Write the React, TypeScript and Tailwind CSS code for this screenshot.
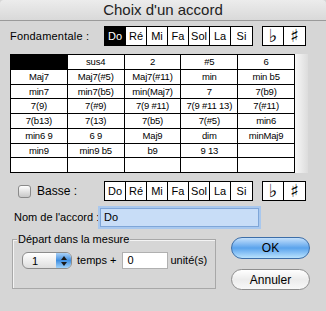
import React from 'react';

const notes = ['Do', 'Ré', 'Mi', 'Fa', 'Sol', 'La', 'Si'];

const chords: string[][] = [
  ['', 'sus4', '2', '#5', '6'],
  ['Maj7', 'Maj7(#5)', 'Maj7(#11)', 'min', 'min b5'],
  ['min7', 'min7(b5)', 'min(Maj7)', '7', '7(b9)'],
  ['7(9)', '7(#9)', '7(9 #11)', '7(9 #11 13)', '7(#11)'],
  ['7(b13)', '7(13)', '7(b5)', '7(#5)', 'min6'],
  ['min6 9', '6 9', 'Maj9', 'dim', 'minMaj9'],
  ['min9', 'min9 b5', 'b9', '9 13', ''],
  ['', '', '', '', ''],
];

const NoteRow = ({ selected }: { selected?: string }) => (
  <div className="flex items-center">
    <div className="flex h-[20px] border border-black divide-x divide-black bg-white">
      {notes.map((n) => (
        <div
          key={n}
          className={`w-[21px] flex items-center justify-center text-[11px] ${n === selected ? 'bg-black text-white' : 'text-black'}`}
        >
          {n}
        </div>
      ))}
    </div>
    <div className="ml-[9px] flex h-[20px] border border-black divide-x divide-black bg-white">
      <div className="w-[21px] flex items-center justify-center text-[18px] leading-none font-bold text-black" style={{ fontFamily: '"DejaVu Sans", sans-serif' }}>♭</div>
      <div className="w-[21px] flex items-center justify-center text-[18px] leading-none font-bold text-black" style={{ fontFamily: '"DejaVu Sans", sans-serif' }}>♯</div>
    </div>
  </div>
);

const App: React.FC = () => {
  return (
    <div className="w-[326px] h-[311px] bg-[#d6d6d6] flex flex-col text-black overflow-hidden" style={{ fontFamily: '"Liberation Sans", Arial, sans-serif' }}>
      {/* Title bar */}
      <div className="h-[21px] shrink-0 bg-gradient-to-b from-[#ececec] to-[#d9d9d9] border-b border-[#9a9a9a] rounded-t-[4px] flex items-center justify-center text-[15px] text-[#222]">
        Choix d'un accord
      </div>

      {/* Fondamentale */}
      <div className="mt-[5px] flex items-center h-[20px]">
        <span className="ml-[10px] w-[94px] text-[11px] tracking-[0.2px]">Fondamentale :</span>
        <NoteRow selected="Do" />
      </div>

      {/* Chord grid */}
      <div className="mt-[8px] ml-[10px] flex">
        <div className="w-[285px] h-[119px] grid grid-cols-5 grid-rows-8 gap-px bg-black p-px">
          {chords.flat().map((c, i) => (
            <div
              key={i}
              className={`flex items-center justify-center text-[9.5px] leading-none tracking-[-0.2px] ${i === 0 ? 'bg-black' : 'bg-white'}`}
            >
              {c}
            </div>
          ))}
        </div>
        <div className="w-[13px] h-[119px] bg-gradient-to-r from-[#f8f8f8] to-[#dcdcdc]" />
      </div>

      {/* Basse */}
      <div className="mt-[8px] flex items-center h-[20px]">
        <div className="ml-[18px] w-[13px] h-[13px] rounded-[3px] border border-[#8a8a8a] bg-gradient-to-b from-[#ffffff] to-[#c8c8c8]" />
        <span className="ml-[6px] w-[67px] text-[12px]">Basse :</span>
        <NoteRow />
      </div>

      {/* Nom de l'accord */}
      <div className="mt-[7px] flex items-center h-[19px]">
        <span className="ml-[14px] w-[86px] text-[11px]">Nom de l'accord :</span>
        <div className="w-[159px] h-[19px] bg-[#c8ddf7] border border-[#7fa6d8] shadow-[0_0_0_2px_#a9c8ee] flex items-center pl-[3px] text-[11px]">
          Do
        </div>
      </div>

      {/* Bottom section */}
      <div className="mt-[12px] flex">
        <div className="ml-[12px] relative w-[204px] h-[50px] border border-[#a8a8a8] shadow-[inset_1px_1px_0_#f4f4f4]">
          <span className="absolute left-[4px] -top-[8px] bg-[#d6d6d6] px-px text-[11px] leading-[14px]">Départ dans la mesure</span>
          <div className="mt-[12px] ml-[9px] flex items-center">
            <div className="w-[50px] h-[17px] rounded-[6px] border border-[#8c8c8c] bg-gradient-to-b from-[#ffffff] to-[#dedede] flex overflow-hidden">
              <span className="flex-1 pl-[9px] text-[11px] leading-[16px]">1</span>
              <div className="w-[15px] bg-gradient-to-b from-[#a9d1f7] via-[#3f8fe0] to-[#9fd3fb] flex items-center justify-center">
                <svg width="6" height="10" viewBox="0 0 6 10">
                  <path d="M3 0 L6 4 L0 4 Z" fill="#1a1a1a" />
                  <path d="M0 6 L6 6 L3 10 Z" fill="#1a1a1a" />
                </svg>
              </div>
            </div>
            <span className="ml-[5px] text-[11px]">temps +</span>
            <div className="ml-[6px] w-[46px] h-[17px] bg-white border border-[#b0b0b0] text-[11px] pl-[4px] leading-[15px]">0</div>
            <span className="ml-[2px] text-[11px]">unité(s)</span>
          </div>
        </div>
        <div className="ml-[15px] -mt-[2px] flex flex-col gap-[10px]">
          <div className="w-[79px] h-[22px] rounded-full border border-[#3d6ea8] bg-gradient-to-b from-[#c4e0fb] via-[#5aa3ec] to-[#b9e2fd] flex items-center justify-center text-[12px]">
            OK
          </div>
          <div className="w-[79px] h-[21px] rounded-full border border-[#8e8e8e] bg-gradient-to-b from-[#ffffff] via-[#ececec] to-[#f8f8f8] flex items-center justify-center text-[12px]">
            Annuler
          </div>
        </div>
      </div>
    </div>
  );
};

export default App;
